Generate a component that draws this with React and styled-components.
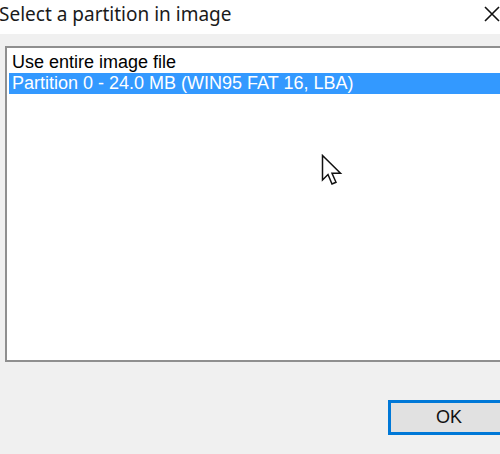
import React from "react";
import styled, { createGlobalStyle } from "styled-components";

const Global = createGlobalStyle`
  html, body { margin: 0; padding: 0; background: #f0f0f0; }
  body { width: 500px; height: 454px; overflow: hidden; }
`;

const Window = styled.div`
  position: relative;
  width: 500px;
  height: 454px;
  overflow: hidden;
  background: #f0f0f0;
  display: flex;
  flex-direction: column;
`;

const TitleBar = styled.div`
  height: 34px;
  flex: none;
  background: #ffffff;
  display: flex;
  align-items: center;
  justify-content: space-between;
  margin-left: -1px;
`;

const Title = styled.div`
  font-family: "Noto Sans", "Open Sans", sans-serif;
  font-size: 19px;
  color: #1a1a1a;
  line-height: 1;
  padding-bottom: 6px;
`;

const Close = styled.div`
  width: 20px;
  height: 34px;
  display: flex;
  align-items: center;
  justify-content: flex-end;
  padding-bottom: 6px;
  box-sizing: border-box;
`;

const Body = styled.div`
  flex: 1;
  display: flex;
  flex-direction: column;
  padding: 12px 0 0 5px;
  width: 540px;
`;

const ListBox = styled.div`
  height: 308px;
  border: 2px solid #8f8f8f;
  border-right: none;
  background: #ffffff;
  padding: 4px 0 0 2px;
  display: flex;
  flex-direction: column;
`;

const Item = styled.div`
  height: 21px;
  line-height: 21px;
  padding-left: 3px;
  font-family: "Liberation Sans", Arial, sans-serif;
  font-size: 18px;
  color: ${(p) => (p.$selected ? "#ffffff" : "#000000")};
  background: ${(p) => (p.$selected ? "#3399ff" : "transparent")};
  white-space: nowrap;
`;

const Footer = styled.div`
  display: flex;
  padding: 38px 0 0 383px;
`;

const Button = styled.div`
  width: 122px;
  height: 35px;
  box-sizing: border-box;
  border: 3px solid #0078d7;
  background: #e1e1e1;
  display: flex;
  align-items: center;
  justify-content: center;
  font-family: "Liberation Sans", Arial, sans-serif;
  font-size: 18px;
  color: #111;
`;

const Cursor = styled.svg`
  position: absolute;
  left: 321px;
  top: 154px;
`;

export default function App() {
  return (
    <>
      <Global />
      <Window>
        <TitleBar>
          <Title>Select a partition in image</Title>
          <Close>
            <svg width="16" height="16" viewBox="0 0 16 16">
              <path d="M1 1 L15 15 M15 1 L1 15" stroke="#111" strokeWidth="1.6" />
            </svg>
          </Close>
        </TitleBar>
        <Body>
          <ListBox>
            <Item>Use entire image file</Item>
            <Item $selected>Partition 0 - 24.0 MB (WIN95 FAT 16, LBA)</Item>
          </ListBox>
          <Footer>
            <Button>OK</Button>
          </Footer>
        </Body>
        <Cursor width="22" height="34" viewBox="0 0 22 34">
          <path
            d="M1.5 1.5 L1.5 26 L7 20.5 L11 30 L15 28.3 L11 19.3 L19.5 19.3 Z"
            fill="#ffffff"
            stroke="#111"
            strokeWidth="1.5"
            strokeLinejoin="miter"
          />
        </Cursor>
      </Window>
    </>
  );
}
